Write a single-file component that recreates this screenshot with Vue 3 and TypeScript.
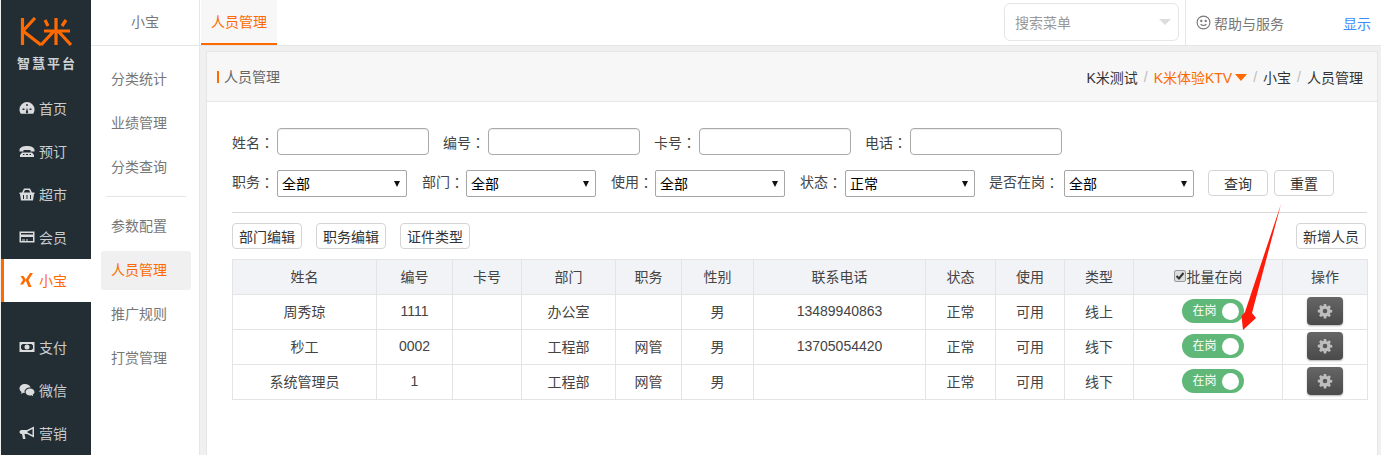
<script setup lang="ts">
interface Person {
  name: string
  no: string
  dept: string
  job: string
  gender: string
  phone: string
  kind: string
}

const topNav = [
  { label: '首页', icon: 'dash' },
  { label: '预订', icon: 'phone' },
  { label: '超市', icon: 'basket' },
  { label: '会员', icon: 'card' },
  { label: '小宝', icon: 'xing', active: true },
  { label: '支付', icon: 'money', gap: true },
  { label: '微信', icon: 'wechat' },
  { label: '营销', icon: 'horn' }
]

const subNavA = ['分类统计', '业绩管理', '分类查询']
const subNavB = ['参数配置', '人员管理', '推广规则', '打赏管理']

const textFields = ['姓名', '编号', '卡号', '电话']
const selectFields = [
  { label: '职务', value: '全部' },
  { label: '部门', value: '全部' },
  { label: '使用', value: '全部' },
  { label: '状态', value: '正常' },
  { label: '是否在岗', value: '全部' }
]

const columns = ['姓名', '编号', '卡号', '部门', '职务', '性别', '联系电话', '状态', '使用', '类型']
const widths = [144, 76, 69, 94, 66, 72, 172, 70, 69, 69, 149, 85]

const people: Person[] = [
  { name: '周秀琼', no: '1111', dept: '办公室', job: '', gender: '男', phone: '13489940863', kind: '线上' },
  { name: '秒工', no: '0002', dept: '工程部', job: '网管', gender: '男', phone: '13705054420', kind: '线下' },
  { name: '系统管理员', no: '1', dept: '工程部', job: '网管', gender: '男', phone: '', kind: '线下' }
]
</script>

<template>
  <div class="page">
    <aside class="rail">
      <div class="logo">
        <svg width="52" height="30" viewBox="0 0 52 30" fill="none" stroke="#ff6a00" stroke-width="3.200">
          <path d="M2.500 1v27M3 14 15 1M3 14l18 14" />
          <path d="M25 3l3 6M46 3l-4 6M36 1v27M24 14h26M34 14 21 28M38 14l13 14" />
        </svg>
        <span class="logo__text">智慧平台</span>
      </div>
      <nav class="rail__nav">
        <a
          v-for="item in topNav"
          :key="item.label"
          class="rail__item"
          :class="{ 'rail__item--active': item.active, 'rail__item--gap': item.gap }"
        >
          <svg class="rail__icon" width="16" height="16" viewBox="0 0 16 16" fill="currentColor">
            <path v-if="item.icon === 'dash'" fill-rule="evenodd" d="M8 2a7.500 7.500 0 0 0-7.500 7.500c0 1.600.5 3 1.300 4.200h12.400c.8-1.200 1.300-2.600 1.300-4.200A7.500 7.500 0 0 0 8 2zM7.300 4h1.400v2H7.300zM3.500 8.500h2v1.400h-2zm7 0h2v1.400h-2zM7 11.500l1-4 1 4a1.200 1.200 0 1 1-2 0z" />
            <path v-else-if="item.icon === 'phone'" fill-rule="evenodd" d="M.5 7C.5 4.500 4 3 8 3s7.500 1.500 7.500 4v1.500h-4V7h-7v1.500h-4zM3 9.500h10l2 2.500v2H1v-2zM4 11h1.500v1H4zm3 0h2v1H7zm3.500 0H12v1h-1.500z" />
            <path v-else-if="item.icon === 'basket'" fill-rule="evenodd" d="M3 6.500 5 2.500h6l2 4h2.500V8H15l-1 6.500H2L1 8H.5V6.500zM4.700 6.500h6.600L10 4H6zM4 9v4h1V9zm3.500 0v4h1V9zM11 9v4h1V9z" />
            <path v-else-if="item.icon === 'card'" fill-rule="evenodd" d="M.5 2.500h15v11H.5zM2 4v1.500h12V4zm0 4v4h12V8zm1 2.500h3v1H3zm4 0h2v1H7z" />
            <path v-else-if="item.icon === 'xing'" d="M1.500 4h3L7 8l-3 4.500H1L4 8zM14 1h-3L6.500 8l3 7h3L9.500 8z" />
            <path v-else-if="item.icon === 'money'" fill-rule="evenodd" d="M.5 3h15v10H.5zM3.500 5 2 6.500v3L3.500 11h9l1.500-1.500v-3L12.500 5zM8 5.500a2.500 2.500 0 1 1 0 5 2.500 2.500 0 0 1 0-5z" />
            <path v-else-if="item.icon === 'wechat'" d="M6 2C2.900 2 .5 4 .5 6.500c0 1.500.8 2.700 2.100 3.600L2 12l2.200-1.200c.5.100 1 .2 1.500.2-.1-.4-.2-.8-.2-1.200C5.500 7.500 7.800 5.500 11 5.500h.6C11 3.500 8.700 2 6 2zM11 6.500c-2.500 0-4.500 1.600-4.500 3.500s2 3.500 4.500 3.500c.5 0 1-.1 1.500-.2l1.700 1-.5-1.600c1.100-.7 1.800-1.700 1.800-2.700 0-1.900-2-3.500-4.500-3.500z" />
            <path v-else fill-rule="evenodd" d="M15 1.500 8 5H2.500C1.400 5 .5 5.900.5 7s.9 2 2 2H3l1 5h2.500L5.500 9H8l7 3.500zM13.500 4v6l-5-2.500V6.500z" />
          </svg>
          {{ item.label }}
        </a>
      </nav>
    </aside>

    <aside class="side">
      <div class="side__head">小宝</div>
      <ul class="side__list">
        <li v-for="item in subNavA" :key="item" class="side__item">{{ item }}</li>
        <li class="side__rule"></li>
        <li
          v-for="item in subNavB"
          :key="item"
          class="side__item"
          :class="{ 'side__item--active': item === '人员管理' }"
        >
          {{ item }}
        </li>
      </ul>
    </aside>

    <main class="main">
      <header class="topbar">
        <div class="tab">人员管理</div>
        <div class="topbar__right">
          <div class="search">
            搜索菜单
            <span class="search__caret"></span>
          </div>
          <div class="help">
            <svg width="15" height="15" viewBox="0 0 15 15" fill="none" stroke="#777" stroke-width="1.100">
              <circle cx="7.500" cy="7.500" r="6.400" />
              <circle cx="5.300" cy="6" r=".6" fill="#777" />
              <circle cx="9.700" cy="6" r=".6" fill="#777" />
              <path d="M4.600 9.200c1.500 1.800 4.300 1.800 5.800 0" />
            </svg>
            帮助与服务
          </div>
          <a class="show">显示</a>
        </div>
      </header>

      <section class="panel">
        <div class="panel__head">
          <h2 class="panel__title">人员管理</h2>
          <div class="crumbs">
            <span>K米测试</span>
            <i>/</i>
            <span class="crumbs__em">K米体验KTV<b class="crumbs__caret"></b></span>
            <i>/</i>
            <span>小宝</span>
            <i>/</i>
            <span>人员管理</span>
          </div>
        </div>

        <div class="panel__body">
          <div class="filters">
            <label v-for="field in textFields" :key="field" class="filter">
              {{ field }}<span class="colon">：</span>
              <input class="input" type="text" />
            </label>
          </div>
          <div class="filters filters--select">
            <label
              v-for="field in selectFields"
              :key="field.label"
              class="filter"
              :class="{ 'filter--long': field.label.length > 2 }"
            >
              {{ field.label }}<span class="colon">：</span>
              <span class="select-wrap">
                <select class="select"><option>{{ field.value }}</option></select>
              </span>
            </label>
            <div class="filter-actions">
              <button type="button" class="btn">查询</button>
              <button type="button" class="btn">重置</button>
            </div>
          </div>

          <div class="toolbar">
            <div class="toolbar__left">
              <button type="button" class="btn btn--sm">部门编辑</button>
              <button type="button" class="btn btn--sm">职务编辑</button>
              <button type="button" class="btn btn--sm">证件类型</button>
            </div>
            <button type="button" class="btn btn--sm">新增人员</button>
          </div>

          <table class="grid">
            <colgroup>
              <col v-for="(w, i) in widths" :key="i" :style="{ width: w + 'px' }" />
            </colgroup>
            <thead>
              <tr>
                <th v-for="col in columns" :key="col">{{ col }}</th>
                <th class="grid__batch">
                  <span class="fake-check">
                    <svg width="10" height="10" viewBox="0 0 10 10" fill="none" stroke="#333" stroke-width="2">
                      <path d="M1.500 5l2.500 2.500L8.500 2" />
                    </svg>
                  </span>批量在岗
                </th>
                <th>操作</th>
              </tr>
            </thead>
            <tbody>
              <tr v-for="p in people" :key="p.name">
                <td>{{ p.name }}</td>
                <td>{{ p.no }}</td>
                <td></td>
                <td>{{ p.dept }}</td>
                <td>{{ p.job }}</td>
                <td>{{ p.gender }}</td>
                <td>{{ p.phone }}</td>
                <td>正常</td>
                <td>可用</td>
                <td>{{ p.kind }}</td>
                <td>
                  <span class="switch">在岗<span class="switch__dot"></span></span>
                </td>
                <td>
                  <span class="gear">
                    <svg width="16" height="16" viewBox="0 0 16 16" fill="#bdbdbd">
                      <path fill-rule="evenodd" d="M6.800 1h2.400l.3 1.900 1.100.5 1.600-1.100 1.700 1.700-1.100 1.600.5 1.100 1.900.3v2.400l-1.900.3-.5 1.100 1.100 1.600-1.700 1.700-1.600-1.100-1.100.5-.3 1.900H6.800l-.3-1.900-1.100-.5-1.600 1.100-1.700-1.700 1.100-1.600-.5-1.100L.8 9.200V6.800l1.900-.3.5-1.100-1.100-1.600 1.700-1.700 1.600 1.100 1.100-.5zM8 5.700a2.300 2.300 0 1 0 0 4.600 2.300 2.300 0 0 0 0-4.600z" />
                    </svg>
                  </span>
                </td>
              </tr>
            </tbody>
          </table>
        </div>
      </section>
    </main>

    <svg class="arrow" width="50" height="135" viewBox="0 0 50 135">
      <path d="M46 4 17 113l4 5L8 130l-1.500-14 3.500-4z" fill="#ff1a0a" />
    </svg>
  </div>
</template>

<style>
body {
  margin: 0;
  background: #fff;
}
</style>

<style scoped>
.page {
  position: relative;
  display: flex;
  width: 1381px;
  height: 455px;
  overflow: hidden;
  font-family: "Liberation Sans", "Noto Sans CJK SC", sans-serif;
  font-size: 14px;
  color: #444;
  background: #f0f0f0;
}

.rail {
  flex: 0 0 90px;
  margin-left: 1px;
  background: #232d34;
  color: #c9ccce;
}

.logo {
  height: 87px;
  display: flex;
  flex-direction: column;
  align-items: center;
  padding-top: 17px;
  box-sizing: border-box;
}

.logo__text {
  margin-top: 10px;
  padding-left: 2px;
  font-size: 13px;
  font-weight: 700;
  line-height: 14px;
  letter-spacing: 2px;
  color: #cfd1d2;
}

.rail__item {
  height: 43px;
  display: flex;
  align-items: center;
  gap: 4px;
  padding-left: 18px;
  padding-bottom: 2px;
  box-sizing: border-box;
}

.rail__icon {
  color: #dadcdd;
}

.rail__item--active {
  background: #fff;
  color: #ff6a00;
  border-left: 3px solid #ff6a00;
  padding-left: 15px;
}

.rail__item--active .rail__icon {
  color: #ff6a00;
}

.rail__item--gap {
  margin-top: 24px;
}

.side {
  flex: 0 0 109px;
  box-sizing: border-box;
  background: #fff;
  border-right: 1px solid #e6e6e6;
  color: #777;
}

.side__head {
  height: 46px;
  line-height: 45px;
  text-align: center;
  border-bottom: 1px solid #e6e6e6;
  box-sizing: border-box;
}

.side__list {
  list-style: none;
  margin: 14px 8px 0 10px;
  padding: 0;
}

.side__item {
  height: 39px;
  line-height: 39px;
  margin-bottom: 5px;
  padding-left: 10px;
  border-radius: 3px;
}

.side__item--active {
  background: #f0f0f0;
  color: #ff6a00;
}

.side__rule {
  height: 1px;
  margin: 9px 5px 10px;
  background: #e6e6e6;
}

.main {
  flex: 1;
  min-width: 0;
}

.topbar {
  height: 46px;
  display: flex;
  justify-content: space-between;
  background: #fff;
  border-bottom: 1px solid #e6e6e6;
  box-sizing: border-box;
}

.tab {
  width: 76px;
  margin-left: 1px;
  height: 45px;
  line-height: 44px;
  text-align: center;
  color: #ff6a00;
  background: #f7f7f7;
  border-bottom: 2px solid #ff6a00;
  box-sizing: border-box;
}

.topbar__right {
  display: flex;
  align-items: center;
  height: 45px;
}

.search {
  position: relative;
  width: 175px;
  height: 38px;
  line-height: 38px;
  margin-top: -2px;
  padding-left: 10px;
  box-sizing: border-box;
  border: 1px solid #e6e6e6;
  border-radius: 6px;
  color: #999;
}

.search__caret {
  position: absolute;
  right: 7px;
  top: 15px;
  border: 6px solid transparent;
  border-top: 6px solid #ddd;
  border-bottom: 0;
}

.help {
  width: 158px;
  height: 45px;
  margin-left: 6px;
  padding-left: 10px;
  box-sizing: border-box;
  display: flex;
  align-items: center;
  gap: 3px;
  border-left: 1px solid #e6e6e6;
  color: #777;
}

.show {
  width: 38px;
  color: #3b8cff;
}

.panel {
  height: 410px;
  margin: 5px 3px 0 6px;
  background: #fff;
  border: 1px solid #e6e6e6;
  border-bottom: 0;
}

.panel__head {
  height: 50px;
  display: flex;
  align-items: center;
  justify-content: space-between;
  padding: 0 14px 0 10px;
  background: #f7f7f7;
  border-bottom: 1px solid #e6e6e6;
  box-sizing: border-box;
}

.panel__title {
  margin: 0;
  padding-left: 5px;
  border-left: 2px solid #ff6a00;
  font-size: 14px;
  font-weight: 400;
  line-height: 12px;
  color: #666;
}

.crumbs {
  display: flex;
  align-items: center;
  color: #333;
}

.crumbs i {
  margin: 0 6px;
  font-style: normal;
  color: #bbb;
}

.crumbs__em {
  color: #ff6a00;
}

.crumbs__caret {
  display: inline-block;
  margin-left: 3px;
  border: 6px solid transparent;
  border-top: 7px solid #ff6a00;
  border-bottom: 0;
  vertical-align: 2px;
}

.panel__body {
  padding: 26px 0 0 25px;
  width: 1135px;
}

.filters {
  display: flex;
  gap: 14px;
}

.filters--select {
  margin-top: 15px;
  gap: 15px;
  padding-bottom: 15px;
  border-bottom: 1px solid #d8d8d8;
}

.filter {
  display: flex;
  align-items: center;
  white-space: nowrap;
}

.filters--select .filter {
  align-items: flex-start;
  line-height: 25px;
}

.colon {
  font-family: "Noto Sans CJK TC", sans-serif;
  margin-right: 3px;
}

.filters--select .filter:nth-child(2) .colon,
.filters--select .filter:nth-child(3) .colon {
  margin-right: 2px;
}

.filters--select .filter--long {
  margin-left: -1px;
}

.filters--select .filter--long .colon {
  margin-right: 5px;
}

.input {
  width: 152px;
  height: 27px;
  padding: 0;
  box-sizing: border-box;
  border: 1px solid #aaa;
  border-radius: 4px;
  box-shadow: inset 0 1px 1px rgba(0, 0, 0, 0.07);
}

.select-wrap {
  position: relative;
  display: block;
}

.select-wrap::after {
  content: "";
  position: absolute;
  right: 7px;
  top: 11px;
  border: 3px solid transparent;
  border-top: 6px solid #111;
  border-bottom: 0;
  pointer-events: none;
}

.select {
  display: block;
  width: 130px;
  height: 27px;
  padding: 0 0 0 4px;
  box-sizing: border-box;
  appearance: none;
  border: 1px solid #a6a6a6;
  border-radius: 2px;
  background: #fff;
  font: inherit;
  line-height: normal;
  color: #000;
}

.filter-actions {
  display: flex;
  gap: 6px;
  margin-left: -1px;
}

.btn {
  height: 26px;
  width: 60px;
  padding: 0;
  border: 1px solid #d5d5d5;
  border-radius: 4px;
  background: #fff;
  font: inherit;
  color: #333;
}

.btn--sm {
  width: 70px;
}

.toolbar {
  display: flex;
  justify-content: space-between;
  margin: 10px 1px 10px 0;
}

.toolbar__left {
  display: flex;
  gap: 14px;
}

.grid {
  width: 1135px;
  table-layout: fixed;
  border-collapse: collapse;
}

.grid th,
.grid td {
  height: 35px;
  padding: 0 0 2px;
  text-align: center;
  border: 1px solid #e4e4e4;
  font-weight: 400;
  box-sizing: border-box;
}

.grid th {
  background: #f2f3f7;
}

.fake-check {
  display: inline-flex;
  align-items: center;
  justify-content: center;
  width: 12px;
  height: 12px;
  margin-right: 1px;
  box-sizing: border-box;
  border: 1px solid #999;
  border-radius: 2px;
  background: #ddd;
  vertical-align: 1px;
}

.switch {
  position: relative;
  display: inline-block;
  width: 62px;
  height: 24px;
  margin-left: 9px;
  line-height: 24px;
  border-radius: 12px;
  background: #5fb878;
  color: #fff;
  text-align: left;
  padding-left: 11px;
  box-sizing: border-box;
  font-size: 12px;
  vertical-align: middle;
}

.switch__dot {
  position: absolute;
  right: 5px;
  top: 4px;
  width: 17px;
  height: 17px;
  border-radius: 50%;
  background: #fff;
}

.gear {
  display: inline-flex;
  align-items: center;
  justify-content: center;
  width: 36px;
  height: 28px;
  border-radius: 4px;
  background: linear-gradient(#666, #4a4a4a);
  box-shadow: 0 1px 2px rgba(0, 0, 0, 0.3);
  vertical-align: middle;
}

.arrow {
  position: absolute;
  left: 1235px;
  top: 200px;
}
</style>
